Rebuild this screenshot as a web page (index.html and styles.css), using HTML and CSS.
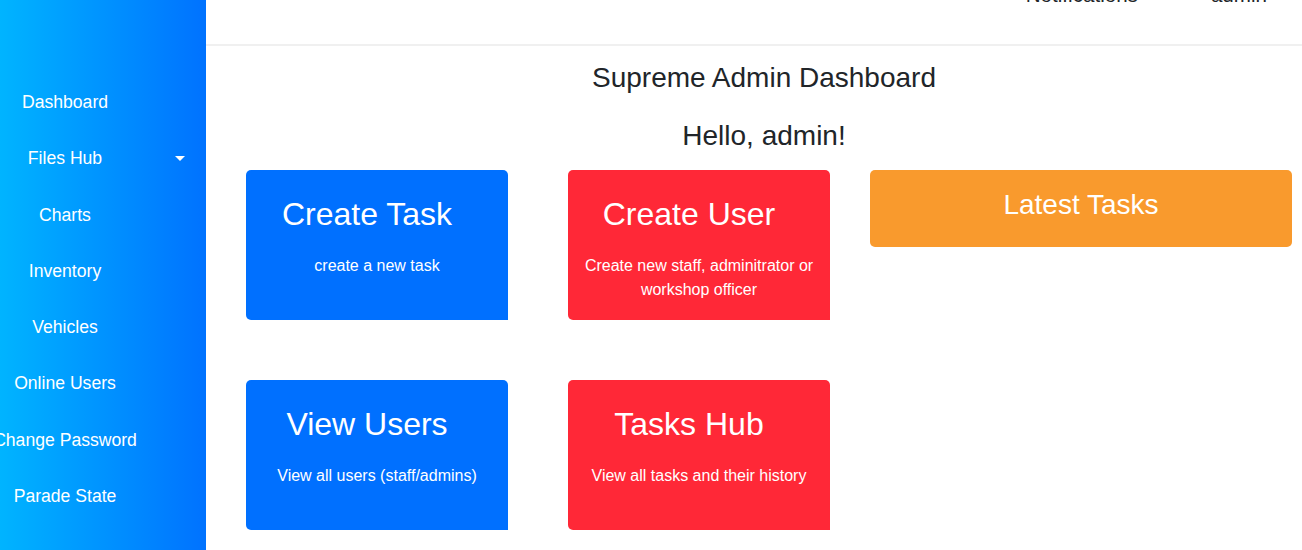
FILE: index.html
```html
<!DOCTYPE html>
<html lang="en">
<head>
<meta charset="utf-8">
<title>Supreme Admin Dashboard</title>
<link rel="stylesheet" href="styles.css">
</head>
<body>
<div class="layout">
  <aside class="sidebar">
    <nav class="side-nav">
      <a class="side-link" href="#">Dashboard</a>
      <a class="side-link has-caret" href="#">Files Hub<span class="caret"></span></a>
      <a class="side-link" href="#">Charts</a>
      <a class="side-link" href="#">Inventory</a>
      <a class="side-link" href="#">Vehicles</a>
      <a class="side-link" href="#">Online Users</a>
      <a class="side-link" href="#">Change Password</a>
      <a class="side-link" href="#">Parade State</a>
    </nav>
  </aside>
  <main class="main">
    <header class="topbar">
      <a class="top-link" href="#">Notifications</a>
      <a class="top-link" href="#">admin</a>
    </header>
    <section class="intro">
      <h3 class="page-title">Supreme Admin Dashboard</h3>
      <h3 class="greeting">Hello, admin!</h3>
    </section>
    <section class="cards">
      <a class="card blue" href="#">
        <h2 class="card-title">Create Task</h2>
        <p class="card-text">create a new task</p>
      </a>
      <a class="card red" href="#">
        <h2 class="card-title">Create User</h2>
        <p class="card-text">Create new staff, adminitrator or workshop officer</p>
      </a>
      <a class="card orange wide" href="#">
        <h3 class="wide-title">Latest Tasks</h3>
      </a>
      <a class="card blue" href="#">
        <h2 class="card-title">View Users</h2>
        <p class="card-text">View all users (staff/admins)</p>
      </a>
      <a class="card red" href="#">
        <h2 class="card-title">Tasks Hub</h2>
        <p class="card-text">View all tasks and their history</p>
      </a>
    </section>
  </main>
</div>
</body>
</html>
```
FILE: styles.css
```css
* { box-sizing: border-box; }

html, body {
  margin: 0;
  padding: 0;
  height: 550px;
  overflow: hidden;
  background: #ffffff;
  font-family: "Liberation Sans", Arial, sans-serif;
  color: #212529;
}

.layout {
  display: flex;
  height: 550px;
}

.sidebar {
  width: 206px;
  flex-shrink: 0;
  background: linear-gradient(to right, #00b4ff, #0072ff);
  padding-top: 74px;
}

.side-nav {
  display: flex;
  flex-direction: column;
}

.side-link {
  position: relative;
  display: flex;
  justify-content: center;
  width: 130px;
  padding: 15px 0;
  font-size: 17.6px;
  line-height: 26.3px;
  white-space: nowrap;
  color: #ffffff;
  text-decoration: none;
}

.caret {
  position: absolute;
  left: 175px;
  top: 26px;
  width: 0;
  height: 0;
  border-left: 5px solid transparent;
  border-right: 5px solid transparent;
  border-top: 5px solid #ffffff;
}

.main {
  flex: 1;
  min-width: 0;
  display: flex;
  flex-direction: column;
}

.topbar {
  height: 46px;
  display: flex;
  justify-content: flex-end;
  align-items: flex-start;
  gap: 73px;
  padding-right: 35px;
  border-bottom: 2px solid #f0f0f0;
  overflow: hidden;
}

.top-link {
  margin-top: -17px;
  font-size: 20.6px;
  line-height: 24px;
  color: #212529;
  text-decoration: none;
}

.intro {
  padding-left: 20px;
  text-align: center;
}

.page-title {
  margin: 15px 0 0;
  font-size: 28px;
  font-weight: 400;
  line-height: 33.6px;
}

.greeting {
  margin: 24px 0 0;
  font-size: 28px;
  font-weight: 400;
  line-height: 33.6px;
}

.cards {
  display: grid;
  grid-template-columns: 282px 262px 422px;
  grid-template-rows: 150px 150px;
  column-gap: 40px;
  row-gap: 60px;
  padding-left: 40px;
  margin-top: 18px;
}

.card {
  display: block;
  width: 262px;
  padding: 25px 15px 0;
  border-radius: 5px 5px 0 5px;
  color: #ffffff;
  text-align: center;
  text-decoration: none;
}

.blue { background: #0070ff; }
.red { background: #ff2837; }
.orange { background: #f99a2d; }

.card-title {
  margin: 0;
  padding-right: 20px;
  font-size: 32px;
  font-weight: 400;
  line-height: 38.4px;
}

.card-text {
  margin: 20px 0 0;
  font-size: 16px;
  line-height: 24px;
}

.card.wide {
  width: 422px;
  align-self: start;
  padding: 18px 15px 25px;
  border-radius: 5px;
}

.wide-title {
  margin: 0;
  font-size: 28px;
  font-weight: 400;
  line-height: 33.6px;
}
```
